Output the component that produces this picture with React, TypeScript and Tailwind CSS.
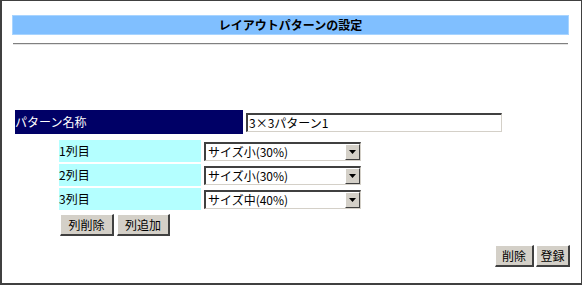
import * as React from "react"

const font = { fontFamily: '"Noto Sans CJK JP", "Liberation Sans", sans-serif' }

function Select({ value }: { value: string }) {
    return (
        <div className="ml-[3px] flex h-[19px] w-[157px] items-stretch border-t-2 border-l-2 border-r border-b border-t-[#404040] border-l-[#404040] border-r-[#d4d0c8] border-b-[#d4d0c8] bg-white">
            <span className="flex-1 pl-[2px] text-[12px] leading-[16px] text-black">{value}</span>
            <span className="flex w-[15px] items-center justify-center border border-t-white border-l-white border-r-[#404040] border-b-[#404040] bg-[#d4d0c8]">
                <svg width="7" height="4" viewBox="0 0 7 4">
                    <path d="M0 0h7L3.5 4z" fill="#000" />
                </svg>
            </span>
        </div>
    )
}

function Button({ label, w }: { label: string; w: string }) {
    return (
        <button
            className={`flex h-[22px] ${w} items-center justify-center border-t border-l border-r-2 border-b-2 border-t-white border-l-white border-r-[#404040] border-b-[#404040] bg-[#d4d0c8] text-[12px] text-black`}
        >
            {label}
        </button>
    )
}

const rows = [
    { label: "1列目", value: "サイズ小(30%)" },
    { label: "2列目", value: "サイズ小(30%)" },
    { label: "3列目", value: "サイズ中(40%)" },
]

export default function App() {
    return (
        <div
            style={font}
            className="box-border flex h-[285px] w-[582px] flex-col border-t border-r border-l-2 border-b-2 border-[#404040] bg-white"
        >
            <div className="ml-[10px] mt-[14px] flex h-[20px] w-[557px] items-center justify-center border border-[#a8d4ff] bg-[#80bfff] text-[12px] font-bold text-black">
                レイアウトパターンの設定
            </div>
            <div className="ml-[11px] mt-[8px] w-[555px] border-t border-b border-t-[#808080] border-b-[#e4e4e4]" />

            <div className="ml-[13px] mt-[65px] flex items-center">
                <div className="flex h-[24px] w-[228px] items-center bg-[#000066] text-[12px] text-white">パターン名称</div>
                <div className="ml-[3px] flex h-[19px] w-[256px] items-center border-t-2 border-l-2 border-r border-b border-t-[#404040] border-l-[#404040] border-r-[#d4d0c8] border-b-[#d4d0c8] bg-white pl-[1px] text-[12px] text-black">
                    3×3パターン1
                </div>
            </div>

            <div className="ml-[57px] mt-[6px] flex flex-col gap-[2px]">
                {rows.map((r) => (
                    <div key={r.label} className="flex items-center">
                        <div className="flex h-[22px] w-[142px] items-center bg-[#b4ffff] text-[12px] text-black">{r.label}</div>
                        <Select value={r.value} />
                    </div>
                ))}
                <div className="mt-[2px] flex gap-[3px] pl-[1px]">
                    <Button label="列削除" w="w-[54px]" />
                    <Button label="列追加" w="w-[53px]" />
                </div>
            </div>

            <div className="mr-[11px] mt-[9px] flex justify-end gap-[2px]">
                <Button label="削除" w="w-[39px]" />
                <Button label="登録" w="w-[34px]" />
            </div>
        </div>
    )
}
